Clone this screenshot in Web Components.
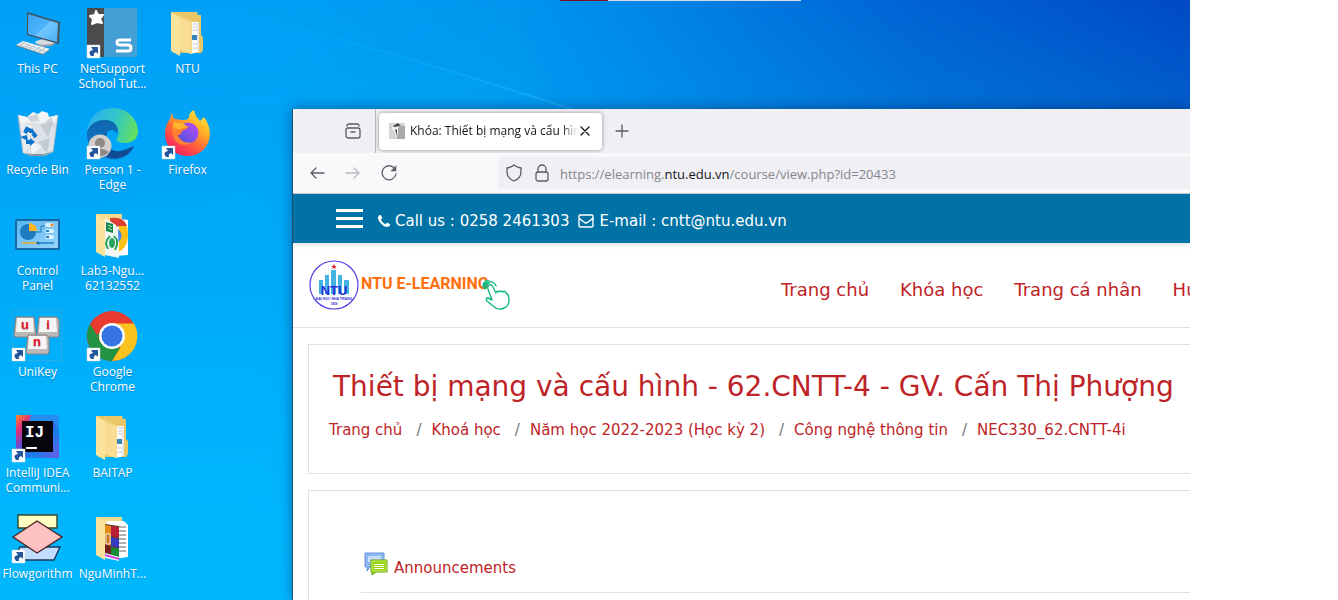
<!DOCTYPE html>
<html lang="vi">
<head>
<meta charset="utf-8">
<title>Desktop</title>
<style>
html,body{height:100%}
body{margin:0;background:#fff;overflow:hidden}
</style>
</head>
<body>
<desktop-screen>
  <desktop-icon name="This PC" art="pc"></desktop-icon>
  <desktop-icon name="Recycle Bin" art="bin"></desktop-icon>
  <desktop-icon name="Control Panel" art="panel"></desktop-icon>
  <desktop-icon name="UniKey" art="unikey" shortcut></desktop-icon>
  <desktop-icon name="IntelliJ IDEA Communi..." art="intellij" shortcut></desktop-icon>
  <desktop-icon name="Flowgorithm" art="flow" shortcut></desktop-icon>
  <desktop-icon name="NetSupport School Tut..." art="netsupport" shortcut></desktop-icon>
  <desktop-icon name="Person 1 - Edge" art="edge" shortcut></desktop-icon>
  <desktop-icon name="Lab3-Ngu... 62132552" art="lab"></desktop-icon>
  <desktop-icon name="Google Chrome" art="chrome" shortcut></desktop-icon>
  <desktop-icon name="BAITAP" art="folder"></desktop-icon>
  <desktop-icon name="NguMinhT..." art="rar"></desktop-icon>
  <desktop-icon name="NTU" art="folder"></desktop-icon>
  <desktop-icon name="Firefox" art="firefox" shortcut></desktop-icon>
  <browser-window slot="window">
    <course-page></course-page>
  </browser-window>
</desktop-screen>

<script>
const define = (name, html, setup) => {
  const t = document.createElement('template');
  t.innerHTML = html;
  customElements.define(name, class extends HTMLElement {
    connectedCallback() {
      if (this.shadowRoot) return;
      this.attachShadow({mode: 'open'}).append(t.content.cloneNode(true));
      if (setup) setup(this, this.shadowRoot);
    }
  });
};

const folderBase = `
  <path d="M10 5H36L37 8H40V28L42 30V43L40 46L12 46Z" fill="#e9c766"/>`;
const art = {
  pc: `
    <defs><linearGradient id="s" x1="0" y1="0" x2="1" y2="1"><stop offset="0" stop-color="#39a4f5"/><stop offset=".5" stop-color="#4db4fb"/><stop offset=".52" stop-color="#72c5fd"/><stop offset="1" stop-color="#4ab0f8"/></linearGradient></defs>
    <path d="M25 34L36 31L44 35L40 39L31 39L24 36Z" fill="#d5dce2"/><path d="M24 36L31 38L41 37L44 35V37L41 39L31 40Z" fill="#8f9ba5"/>
    <path d="M16 5L49 15L48 37L16 28Z" fill="#44525e"/><path d="M17 7L47 16L46 35L17 27Z" fill="url(#s)"/>
    <path d="M5 38L12 34L39 42L32 47Z" fill="#eef2f5"/><path d="M5 38L32 47L39 42V43L32 48L5 39Z" fill="#77848e"/>
    <path d="M9 38L33 45M11 36L35 44M8 39L14 35M13 41L19 37M18 42L24 38M23 44L29 40M28 45L34 41" stroke="#b1bbc3" stroke-width=".8"/>`,
  netsupport: `
    <path d="M1 1H51V50H1Z" fill="#439fd6"/><path d="M1 1H18V50H1Z" fill="#4b4b4d"/>
    <path d="M10 4L12 8L17 8L14 12L16 16L11 15L6 17L7 12L4 9L9 8Z" fill="#fff" stroke="#fff" stroke-width="2" stroke-linejoin="round"/>
    <path d="M45 33H34Q31 33 31 35.500T34 38H42Q45 38 45 41T42 44H30" fill="none" stroke="#fff" stroke-width="3"/>`,
  folder: folderBase + `
    <path d="M30 15H37V45L30 47Z" fill="#fff"/><path d="M32 17H36M32 20H36M32 23H36M32 37H36M32 41H36" stroke="#b9c6d6"/><path d="M31 28H36V33H31Z" fill="#3585b8"/><path d="M36 15H38V45H36Z" fill="#e5e9ef"/>
    <path d="M18 8L31 15V47L26 45L18 42Z" fill="#f5d88b"/><path d="M18 7L24 10L24 43L18 42Z" fill="#eccb74"/>
    <path d="M10 5L19 10V49L10 44Z" fill="#fbe39c"/><path d="M19 10L30 16V47L19 43Z" fill="#f8dd92"/>`,
  lab: `
    <path d="M10 5H36V40H12Z" fill="#f7dc8e"/><path d="M28 9L42 11V46L28 47Z" fill="#fff"/>
    <path d="M24 9Q38 7 41 17L25 18Z" fill="#dc3f31"/><path d="M33 17H41Q45 36 33 43Z" fill="#fbc119"/><path d="M32 20Q39 26 32 34Z" fill="#4285f4"/>
    <path d="M19 9L30 16L32 21L33 49L19 46Z" fill="#f3f7f3"/><path d="M20 13L27 15V24L20 22Z" fill="#168747"/><path d="M22 16L26 18M22 19L26 21" stroke="#bfe3cc"/>
    <path d="M24 27L21 31L20 35L22 40M28 27L31 31L31 36L29 41" stroke="#25a45b" stroke-width="2" fill="none"/><ellipse cx="26" cy="34" rx="3" ry="5" fill="#25a45b"/>
    <path d="M10 5L19 11V48L10 43Z" fill="#fbe39c"/>`,
  rar: `
    <path d="M10 5H36V40H12Z" fill="#f7dc8e"/><path d="M20 9L38 9L42 13V45L28 47Z" fill="#fff"/><path d="M33 15H40M33 19H40M33 23H40M33 27H40M33 31H40M33 35H40M33 39H40" stroke="#616469"/>
    <path d="M19 12L33 14V45L19 41Z" fill="#643b24"/><path d="M19 13L25 14V24L19 23Z" fill="#e48b17"/><path d="M25 14L33 15V26L25 24Z" fill="#b81f35"/><path d="M19 23L25 24V34L19 32Z" fill="#cf7216"/><path d="M25 25L33 27V36L25 34Z" fill="#353cc2"/><path d="M19 33L25 35V42L19 40Z" fill="#761d1d"/><path d="M25 35L33 37V45L25 43Z" fill="#158c35"/><path d="M20 22H24V32H20Z" fill="none" stroke="#eee"/>
    <path d="M19 41L33 45V49L19 46Z" fill="#e4f3ff"/><path d="M19 43L33 47" stroke="#e31ae1" stroke-width="1.6"/>
    <path d="M10 5L19 11V48L10 43Z" fill="#fbe39c"/>`,
  bin: `
    <path d="M7 7L16 9H38L47 7L42 44L33 48H20L12 45Z" fill="#dce2e7"/><path d="M7 7L16 9L22 4L27 6L31 3L37 5L38 9L47 7L44 14L10 15Z" fill="#f2f4f6"/>
    <path d="M16 9L26 6L29 13L20 14ZM34 14L41 9L43 20Z" fill="#cdd4db"/><path d="M10 15L21 18L16 42L12 44Z" fill="#e9edf0"/><path d="M29 17L42 14L37 29ZM27 34L39 30L36 45Z" fill="#c2cad2"/><path d="M20 34L31 38L21 46Z" fill="#f3f5f7"/><path d="M12 45L20 46L33 46L42 43L33 48L20 48Z" fill="#8c979f"/>
    <path d="M7 7L12 45M47 7L42 44" stroke="#aeb8c1" stroke-width=".8"/>
    <g fill="none" stroke="#0b73c9" stroke-width="4"><path d="M14 25L16 21L20 23M22 25L25 29M20 34H15"/></g><path d="M21 20L24 25L18 25ZM19 30V38L24 34ZM9 29L16 27L17 33Z" fill="#0b73c9"/>`,
  edge: `
    <defs><linearGradient id="a" x1="0" y1=".4" x2="1" y2=".6"><stop offset="0" stop-color="#2bb0ef"/><stop offset=".5" stop-color="#2fc6cc"/><stop offset="1" stop-color="#65e15b"/></linearGradient><linearGradient id="b" x1="0" y1="0" x2="0" y2="1"><stop offset="0" stop-color="#0e64ae"/><stop offset="1" stop-color="#1780ce"/></linearGradient></defs>
    <path d="M1 24C2 8 14 0 27 0C42 0 52 12 52 23C52 31 46 35 39 35C33 35 29 33 31 30C36 22 28 13 18 13C8 13 2 19 1 24Z" fill="url(#a)"/>
    <path d="M1 24C4 16 10 12 19 12C28 12 34 19 31 26C29 22 24 20 21 25C17 33 24 46 35 45C41 45 46 41 48 38C43 51 30 52 24 51C11 50 0 39 1 24Z" fill="url(#b)"/>
    <path d="M21 24C16 34 24 45 34 43C39 42 43 40 48 38C43 49 31 52 23 50C14 45 13 31 21 24Z" fill="#104b93"/>
    <circle cx="14" cy="38" r="11.5" fill="#d2cfcd"/><circle cx="14" cy="35" r="5" fill="#8b8886"/><path d="M5 44Q14 37 23 44Q15 52 5 44Z" fill="#8b8886"/>`,
  firefox: `
    <defs><linearGradient id="f" x1=".9" y1="0" x2=".2" y2="1"><stop offset="0" stop-color="#fff148"/><stop offset=".35" stop-color="#ffae24"/><stop offset=".65" stop-color="#ff5a3d"/><stop offset="1" stop-color="#f5156c"/></linearGradient><linearGradient id="p" x1="1" y1="0" x2="0" y2="1"><stop offset="0" stop-color="#c14bff"/><stop offset="1" stop-color="#4553d4"/></linearGradient></defs>
    <path d="M11 4Q11 9 14 11L22 12Q28 12 28 9Q28 4 33 2Q34 8 39 13L43 9Q49 17 49 27C48 39 39 48 27 48C14 48 4 39 4 26Q4 17 9 11Z" fill="url(#f)"/>
    <circle cx="27" cy="25" r="10.5" fill="url(#p)"/><path d="M12 14Q21 12 25 18Q29 18 27 20Q23 22 21 23Q20 28 16 27Q22 37 32 34Q21 41 14 32Q9 24 12 14Z" fill="#ff812f"/><path d="M13 14L22 15L26 19L20 21Q14 22 12 18Z" fill="#ffb52b"/>`,
  panel: `
    <defs><linearGradient id="c" x1="0" y1="0" x2="1" y2="1"><stop offset="0" stop-color="#5db7f3"/><stop offset="1" stop-color="#95d3fb"/></linearGradient></defs>
    <path d="M5 10H48L49 11V40L48 41H5L4 40V11Z" fill="#146aa7"/><path d="M6 12H47V39H6Z" fill="url(#c)"/><circle cx="17" cy="23" r="8" fill="#1c7bc1"/><path d="M18 22V14A8 8 0 0 1 26 22Z" fill="#ffb51c"/>
    <path d="M25 23H30V17H34" fill="none" stroke="#1f79b8"/><g fill="#d9f0ff"><rect x="34" y="14" width="9" height="4" rx="2"/><rect x="34" y="20" width="9" height="4" rx="2"/><rect x="34" y="26" width="9" height="4" rx="2"/></g><circle cx="41" cy="16" r="1.5" fill="#f18221"/><path d="M35 21H38V23H35ZM35 27H38V29H35Z" fill="#2680be"/><path d="M11 34H26" stroke="#ffa50b" stroke-width="1.3"/><path d="M26 34H43" stroke="#086ebc" stroke-width="1.3"/><circle cx="27" cy="34" r="1.5" fill="#0b73c3"/>`,
  unikey: `
    <path d="M1.500 .5H50.5V50.500H1.500Z" fill="none" stroke="#3aa9dd" stroke-width=".7"/>
    <g stroke="#8b8582"><path d="M5 7H23L25 25Q25 27 23 27H4L3 25Z" fill="#bdb9b6"/><path d="M28 7H46L48 10V25L47 27H27L26 25Z" fill="#bdb9b6"/><path d="M17 25H36L38 28V42L37 44H17L15 43Z" fill="#bdb9b6"/></g>
    <path d="M6 8H22L23 22H5ZM29 8H45L46 22H28ZM18 26H35L36 39H17Z" fill="#f6f4f4"/>
    <g fill="#e8161d" font-family="Liberation Sans" font-weight="700" font-size="13" text-anchor="middle"><text x="14" y="19">u</text><text x="37" y="19">i</text><text x="26" y="36">n</text></g>`,
  chrome: `
    <circle cx="26" cy="26" r="25" fill="#e63b2e"/><path d="M26 13.500H48A25 25 0 0 1 26 51L37 32Z" fill="#fcc31e"/><path d="M4 14L15 33L26 38H34L26 51A25.500 25.500 0 0 1 4 14Z" fill="#229342"/><path d="M4 14L15 32V24H5Z" fill="#229342"/><circle cx="26" cy="26" r="13" fill="#fff"/><circle cx="26" cy="26" r="10.500" fill="#3575e6"/>`,
  intellij: `
    <defs><linearGradient id="i" x1="0" y1="0" x2="1" y2="1"><stop offset="0" stop-color="#fb8b25"/><stop offset=".2" stop-color="#e32d79"/><stop offset=".42" stop-color="#5a50d8"/><stop offset=".65" stop-color="#177fec"/><stop offset="1" stop-color="#7059e4"/></linearGradient></defs>
    <path d="M5 4H48V47H5Z" fill="url(#i)"/><path d="M20 4H48V18L42 10H18Z" fill="#258df0"/><path d="M11 10H42V41H11Z" fill="#08040c"/><text x="14" y="26" fill="#fff" font-family="Liberation Mono" font-weight="700" font-size="16">IJ</text><path d="M15 36H26V38H15Z" fill="#fff"/>`,
  flow: `
    <g stroke="#33312b" stroke-width="1.400"><path d="M7 3H46V16H7Z" fill="#ffffc1" stroke="#344923"/><path d="M9 35H49L43 48H2Z" fill="#c1ddff" stroke="#1c3858"/><path d="M2 25L26 9L51 25L26 41Z" fill="#ffc2c2" stroke="#4e2425"/></g>`
};
const badge = `<path d="M1 38H14V51H1Z" fill="#fff" stroke="#ccd4dc" stroke-width=".5"/><path d="M5 49Q1 44 7 43L5 40H12V47L10 45Q7 46 8 49Z" fill="#25559b"/>`;

define('desktop-icon', `
<style>
:host{display:block}
button{all:unset;box-sizing:border-box;width:100%;display:flex;flex-direction:column;align-items:center;cursor:default;
  font:12px/15px "Open Sans","Noto Sans",sans-serif;color:#fff;text-align:center;text-shadow:0 1px 1px rgba(0,50,110,.35)}
svg{width:52px;height:52px;flex:none;margin:0 2px 2px 0}
span{display:block;white-space:pre-line}
</style>
<button type="button"><svg viewBox="0 0 52 52" aria-hidden="true"></svg><span></span></button>`,
(el, root) => {
  root.querySelector('svg').innerHTML = art[el.getAttribute('art')] + (el.hasAttribute('shortcut') ? badge : '');
  const twoLine = {'Control Panel': 'Control\nPanel', 'IntelliJ IDEA Communi...': 'IntelliJ IDEA\nCommuni...', 'NetSupport School Tut...': 'NetSupport\nSchool Tut...', 'Person 1 - Edge': 'Person 1 -\nEdge', 'Lab3-Ngu... 62132552': 'Lab3-Ngu...\n62132552', 'Google Chrome': 'Google\nChrome'};
  const name = el.getAttribute('name');
  root.querySelector('span').textContent = twoLine[name] || name;
});

define('desktop-screen', `
<style>
:host{display:block;height:100%;margin-right:148px;position:relative;overflow:hidden;
  background:
   linear-gradient(to bottom,rgba(0,186,255,0) 0,rgba(0,186,255,.8) 80%,rgba(0,186,255,.9) 100%),
   linear-gradient(94deg,#009ef5 0,#009ff5 22%,#0095ee 42%,#0086e8 52%,#0074de 63%,#0062d2 75%,#0055ca 87%,#0045c0 100%)}
.ray{position:absolute;left:0;top:0;width:600px;height:130px}
.icons{position:relative;display:grid;grid-template-rows:repeat(6,101px);grid-auto-columns:75px;grid-auto-flow:column;padding-top:7px}
.strip{position:absolute;left:560px;top:0;width:241px;height:1px;background:linear-gradient(to right,#7d0f2d 48px,#d8dde0 48px)}
::slotted([slot=window]){position:absolute;left:293px;top:109px;right:0;bottom:0}
</style>
<svg class="ray" viewBox="0 0 600 130" aria-hidden="true"><defs><linearGradient id="r" x1="0" y1="0" x2="1" y2="0"><stop offset="0" stop-color="#0af" stop-opacity=".1"/><stop offset="1" stop-color="#2ab4ff" stop-opacity=".55"/></linearGradient></defs><path d="M188 0Q400 52 580 112H293L0 60V0Z" fill="#00a8ff" opacity=".14"/><path d="M188 0Q400 52 580 112" fill="none" stroke="url(#r)" stroke-width="2"/></svg>
<div class="icons"><slot></slot></div>
<div class="strip"></div>
<slot name="window"></slot>`);

define('browser-window', `
<style>
:host{display:flex;flex-direction:column;background:#fff;box-shadow:-1px 0 0 #24506e,0 0 12px rgba(0,20,60,.5);font-family:"Open Sans","Noto Sans",sans-serif;color:#15141a}
button{all:unset;display:grid;place-items:center;flex:none;width:36px;height:32px;color:#5b5b66}
svg{display:block;fill:none;stroke:currentColor;stroke-width:1.3;stroke-linecap:round;stroke-linejoin:round}
.tabs{display:flex;align-items:center;height:44px;background:#f0f0f4;flex:none}
.view{margin-left:42px}
.sep{align-self:stretch;width:1px;background:#b8b8be;margin:0 3px 0 4px}
.tab{box-sizing:border-box;display:flex;align-items:center;width:223px;height:37px;padding:0 10px;background:#fff;border-radius:4px;box-shadow:0 0 4px rgba(0,0,0,.4)}
.fav{stroke:none;flex:none;margin-right:5px}
.title{flex:1;overflow:hidden;white-space:nowrap;font:12px/20px "Open Sans","Noto Sans",sans-serif;color:#15141a;-webkit-mask-image:linear-gradient(to left,transparent,#000 16px);mask-image:linear-gradient(to left,transparent,#000 16px)}
.tab button{width:14px;height:24px;color:#15141a}
.new{margin-left:2px}
.bar{display:flex;align-items:center;box-sizing:border-box;height:41px;flex:none;background:#f9f9fb;border-bottom:1px solid #ccccd2;padding-left:6px}
.bar .off{opacity:.4}
.url{display:flex;align-items:center;flex:1;height:32px;margin-left:91px;padding-left:6px;background:#f0f0f4;border-radius:4px 0 0 4px;overflow:hidden}
.url button{width:20px;margin-right:8px}
.addr{font-size:13px;line-height:20px;color:#85858d;white-space:nowrap;outline:0;padding-top:2px}
.addr b{font-weight:400;color:#15141a}
main{flex:1;min-height:0;overflow:hidden}
</style>
<div class="tabs">
 <button class="view" type="button" aria-label="Firefox View"><svg width="18" height="18" viewBox="0 0 18 18"><rect x="2" y="6" width="14" height="10" rx="2"/><path d="M3 4Q3 2 5 2H13Q15 2 15 4M7 10H11"/></svg></button>
 <div class="sep"></div>
 <div class="tab"><svg class="fav" width="16" height="16" viewBox="0 0 16 16"><path d="M0 0H16V16H0Z" fill="#d5d5d5"/><path d="M9 3H16V16H8Z" fill="#a9a9a9"/><path d="M3 4Q5 1 10 1L12 3L9 5L9 10L7 14L6 9L3 6Z" fill="#f2f2f2"/><path d="M4 3L9 0L12 3L5 4ZM6 6L8 7L8 13Z" fill="#444"/></svg><span class="title">Khóa: Thiết bị mạng và cấu hình</span><button type="button" aria-label="Close tab"><svg width="10" height="10" viewBox="0 0 10 10"><path d="M1 1L9 9M9 1L1 9"/></svg></button></div>
 <button class="new" type="button" aria-label="New tab"><svg width="14" height="14" viewBox="0 0 14 14"><path d="M7 1V13M1 7H13"/></svg></button>
</div>
<div class="bar">
 <button type="button" aria-label="Back"><svg width="16" height="16" viewBox="0 0 16 16"><path d="M15 8H2M7 3L2 8L7 13"/></svg></button>
 <button class="off" type="button" aria-label="Forward"><svg width="16" height="16" viewBox="0 0 16 16"><path d="M1 8H14M9 3L14 8L9 13"/></svg></button>
 <button type="button" aria-label="Reload"><svg width="16" height="16" viewBox="0 0 16 16"><path d="M14 4A7 7 0 1 0 15 9"/><path d="M15 1V6H10Z" fill="currentColor" stroke-width=".5"/></svg></button>
 <div class="url">
  <button type="button" aria-label="Tracking protection"><svg width="16" height="18" viewBox="0 0 16 18"><path d="M8 1Q10 3 15 4V8Q15 14 8 17Q1 14 1 8V4Q6 3 8 1Z"/></svg></button>
  <button type="button" aria-label="Site information"><svg width="16" height="18" viewBox="0 0 16 18"><rect x="2" y="8" width="12" height="9" rx="2"/><path d="M4 8V5A4 4 0 0 1 12 5V8"/></svg></button>
  <div class="addr" role="textbox" contenteditable="true" spellcheck="false" aria-label="Address">https://elearning.<b>ntu.edu.vn</b>/course/view.php?id=20433</div>
 </div>
</div>
<main><slot></slot></main>`);

define('ntu-logo', `
<style>
:host{display:block}
a{display:flex;align-items:flex-start;text-decoration:none}
.name{font:700 16px/22px Roboto,"Liberation Sans",sans-serif;color:#ff6f0a;margin:13px 0 0 2px;white-space:nowrap}
.hand{margin:20px 0 0 -8px}
svg{flex:none}
</style>
<a href="#">
<svg width="50" height="50" viewBox="0 0 50 50" aria-hidden="true"><circle cx="25" cy="25" r="24" fill="#fff" stroke="#5040e0" stroke-width="1.2"/><path d="M10 34V20H14V34ZM16 34V15H20V34ZM22 34V10H27V34ZM29 34V15H33V34ZM35 34V20H40V34Z" fill="#43b3e2"/><path d="M25 4L26 6H28L26 7L27 9L25 8L23 9L24 7L22 6H24Z" fill="#e01c1c"/><text x="25" y="35" text-anchor="middle" font-family="Liberation Sans" font-weight="700" font-size="13" fill="#2d2cd8">NTU</text><text x="25" y="40" text-anchor="middle" font-family="Liberation Sans" font-weight="700" font-size="3.500" fill="#2d2cd8">ĐẠI HỌC NHA TRANG</text><text x="25" y="45" text-anchor="middle" font-family="Liberation Sans" font-weight="700" font-size="3" fill="#2d2cd8">1959</text></svg>
<span class="name">NTU E-LEARNING</span>
<svg class="hand" width="30" height="30" viewBox="0 0 30 30" fill="none" stroke="#10b981" stroke-width="1.400" stroke-linejoin="round" stroke-linecap="round" aria-hidden="true"><path d="M8 5Q11 4 12 7L15 13Q16 10 18 12Q20 10 22 12Q24 10 25 13Q28 14 28 20Q28 26 23 28Q17 31 12 26L6 21Q4 18 7 18L11 20L7 9Q6 6 8 5"/><path d="M4 9Q2 3 8 2Q13 1 15 6M2 7Q2 1 8 0M5 8Q4 4 8 3"/></svg>
</a>`);

define('course-page', `
<style>
:host{display:block;font-family:"DejaVu Sans",Verdana,sans-serif;color:#be2327}
a{color:inherit;text-decoration:none;white-space:nowrap}
.top{position:relative;display:flex;align-items:center;box-sizing:border-box;height:49px;padding:5px 0 0 43px;background:#0072a5;color:#fff;font-size:15px;line-height:24px;box-shadow:0 1px 6px rgba(0,0,0,.15)}
.menu{all:unset;display:flex;flex-direction:column;gap:5px;width:27px;margin:0 15px 5px 0}
.menu i{height:3px;background:#fff}
.top a{display:flex;align-items:center;margin-right:9px}
.top svg{margin-right:5px;fill:#fff}
header{display:grid;grid-template-columns:472px 1fr;align-items:center;box-sizing:border-box;height:85px;padding-left:16px;border-bottom:1px solid #e0e2e5;overflow:hidden}
nav{display:flex;gap:31px;font-size:18px;line-height:28px;padding-top:10px}
section{box-sizing:border-box;margin:16px 0 0 15px;border:1px solid #dee0e3;border-right:0;background:#fff;overflow:hidden}
.head{height:130px;padding:21px 0 0 20px}
h1{margin:0 0 14px 4px;font-size:28px;line-height:42px;font-weight:400;white-space:nowrap}
ol{display:flex;list-style:none;margin:0;padding:0;font-size:15px;line-height:16px}
li+li::before{content:"/";color:#6c757d;padding:0 10px 0 14px}
.body{height:200px;padding:60px 0 0 52px}
.act{display:flex;align-items:center;height:34px;padding:0 0 7px 3px;border-bottom:1px solid #dee2e6;font-size:15px}
.act a{display:flex;align-items:center}
.act svg{margin-right:6px;margin-top:-8px}
</style>
<div class="top">
 <button class="menu" type="button" aria-label="Menu"><i></i><i></i><i></i></button>
 <a href="#"><svg width="12" height="12" viewBox="0 128 1408 1408"><path d="M1408 1240q0 27-10 70.5t-21 68.5q-21 50-122 106-94 51-186 51-27 0-52.500-3.500t-57.500-12.500-47.500-14.500-55.500-20.500-49-18q-98-35-175-83-128-79-264.500-215.500t-215.500-264.500q-48-77-83-175-3-9-18-49t-20.500-55.500-14.500-47.500-12.500-57.500-3.500-52.500q0-92 51-186 56-101 106-122 25-11 68.500-21t70.500-10q14 0 21 3 18 6 53 76 11 19 30 54t35 63.500 31 53.500q3 4 17.500 25t21.500 35.500 7 28.500q0 20-28.500 50t-62 55-62 53-28.500 46q0 9 5 22.500t8.500 20.500 14 24 11.500 19q76 137 174 235t235 174q2 1 19 11.500t24 14 20.500 8.500 22.500 5q18 0 46-28.500t53-62 55-62 50-28.500q14 0 28.500 7t35.500 21.500 25 17.500q25 15 53.500 31t63.500 35 54 30q70 35 76 53 3 7 3 21z"/></svg>Call us : 0258 2461303</a>
 <a href="#"><svg width="16" height="14" viewBox="0 0 16 14"><path d="M2 1H14L15 2V12L14 13H2L1 12V2ZM1 4Q3 6 6 8Q8 10 10 8Q13 6 15 4" style="fill:none;stroke:#fff;stroke-width:1.400"/></svg>E-mail : cntt@ntu.edu.vn</a>
</div>
<header><ntu-logo></ntu-logo>
<nav><a href="#">Trang chủ</a><a href="#">Khóa học</a><a href="#">Trang cá nhân</a><a href="#">Hướng dẫn</a></nav></header>
<section class="head"><h1>Thiết bị mạng và cấu hình - 62.CNTT-4 - GV. Cấn Thị Phượng</h1>
<ol><li><a href="#">Trang chủ</a></li><li><a href="#">Khoá học</a></li><li><a href="#">Năm học 2022-2023 (Học kỳ 2)</a></li><li><a href="#">Công nghệ thông tin</a></li><li><a href="#">NEC330_62.CNTT-4i</a></li></ol></section>
<section class="body"><div class="act"><a href="#"><svg width="24" height="24" viewBox="0 0 24 24" aria-hidden="true"><path d="M1 1H20V15H6L3 19V15H1Z" fill="#8db9f3" stroke="#6690dc"/><path d="M4 5H17M4 7H17M4 9H17" stroke="#fff"/><path d="M7 8H23V20H12L8 23V20H7Z" fill="#98d40c" stroke="#69a115"/><path d="M8 9H22V19H8Z" fill="none" stroke="#c0ea62"/><path d="M10 12.500H20M10 14.500H20M10 16.500H20" stroke="#fff"/></svg>Announcements</a></div></section>`);
</script>
</body>
</html>
